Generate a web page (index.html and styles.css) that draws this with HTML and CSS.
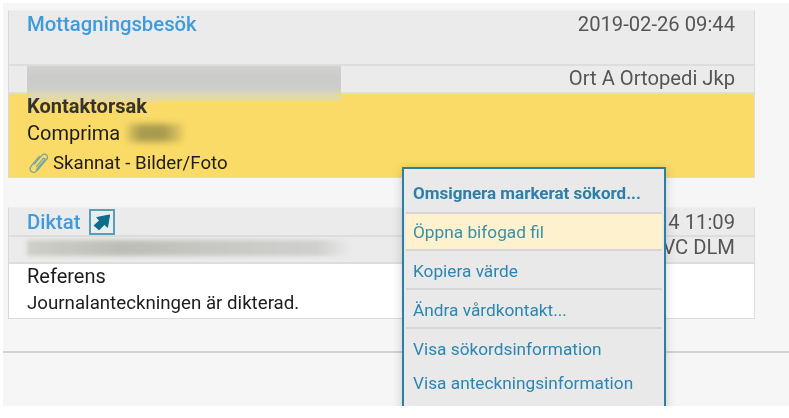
FILE: index.html
```html
<!DOCTYPE html>
<html lang="sv">
<head>
<meta charset="utf-8">
<title>Journal</title>
<link rel="stylesheet" href="styles.css">
</head>
<body>
<div class="app">
  <section class="card card-first">
    <header class="head head-tall">
      <a class="title">Mottagningsbesök</a>
      <span class="meta">2019-02-26 09:44</span>
    </header>
    <div class="sub sub-first">
      <span class="meta">Ort A Ortopedi Jkp</span>
      <div class="redact redact-a"></div>
    </div>
    <div class="body yellow">
      <div class="strong">Kontaktorsak</div>
      <div class="line-big">Comprima<span class="redact-b"></span></div>
      <div class="line-small">
        <svg class="clip" viewBox="2 1 16 17" width="19" height="20" aria-hidden="true">
          <path d="M6.500 10.500 12.600 3.200c1.200-1.400 3-1.500 4.100-.5 1.100 1 1.100 2.700 0 4L9.200 15.600c-1.700 2-3.900 2.400-5.300 1.200-1.400-1.200-1.300-3.300.3-5.200L10.600 4M8.400 12.400 13.600 6.200c.6-.7 1.200-.9 1.600-.5.4.4.3 1-.3 1.700L8.300 15" fill="none" stroke="#7ba79a" stroke-width="1.100" stroke-linecap="round"/>
        </svg>
        <span>Skannat - Bilder/Foto</span>
      </div>
    </div>
  </section>

  <section class="card card-second">
    <header class="head head-short">
      <div class="title-wrap">
        <a class="title">Diktat</a>
        <span class="jump">
          <svg viewBox="0 0 20 20" width="20" height="20" aria-hidden="true">
            <path d="M2.500 13.500 8 8.500 5 5.500 17.500 3 15.500 15 12.500 12 7 17.500Z" fill="#0f6d8c" stroke="#0f6d8c" stroke-width="1.200" stroke-linejoin="round"/>
          </svg>
        </span>
      </div>
      <span class="meta">2019-02-14 11:09</span>
    </header>
    <div class="sub sub-second">
      <span class="meta">VC DLM</span>
      <div class="redact redact-c"></div>
    </div>
    <div class="body white">
      <div class="line-big">Referens</div>
      <div class="line-small line-plain">Journalanteckningen är dikterad.</div>
    </div>
  </section>

  <div class="rule"></div>

  <nav class="menu">
    <div class="item item-bold">Omsignera markerat sökord...</div>
    <div class="item item-active">Öppna bifogad fil</div>
    <div class="item item-sep">Kopiera värde</div>
    <div class="item item-sep">Ändra vårdkontakt...</div>
    <div class="item item-plain">Visa sökordsinformation</div>
    <div class="item item-plain2">Visa anteckningsinformation</div>
  </nav>
</div>
</body>
</html>
```
FILE: styles.css
```css
* { box-sizing: border-box; }
html, body { margin: 0; height: 100%; background: #fff; overflow: hidden; }
body { font-family: Roboto, "Liberation Sans", sans-serif; color: #222; }
.app {
  position: relative;
  margin: 3px 0 0 3px;
  height: 403px;
  padding: 7px 34px 0 5px;
  background: #f6f6f6;
  overflow: hidden;
  filter: blur(0.35px);
}
.card {
  border: 1px solid #dcdcdc;
  border-top-color: #f0f0f0;
  border-left-color: #d8d8d8;
  background: #ebebeb;
  display: flex;
  flex-direction: column;
}
.card-first { height: 168px; }
.card-second { height: 112px; margin-top: 29px; }
.head { display: flex; justify-content: space-between; padding: 0 19px 0 18px; border-bottom: 2px solid #dddddd; }
.head-tall { height: 55px; padding-top: 1px; }
.head-short { height: 29px; padding-top: 2px; align-items: flex-start; }
.title { color: #3f9bdc; font-size: 20.300px; line-height: 24px; font-weight: 500; }
.title-wrap { display: flex; gap: 9px; }
.jump {
  width: 26px; height: 26px; margin-top: -1px;
  border: 2px solid #5a9fb8;
  background: #e6eef0;
  display: flex; align-items: center; justify-content: center;
}
.meta { color: #555; font-size: 20.200px; line-height: 24px; }
.sub { position: relative; display: flex; justify-content: flex-end; padding: 0 19px 0 18px; border-bottom: 2px solid #dddddd; }
.sub-first { height: 28px; }
.sub-second { height: 27px; align-items: flex-start; }
.sub-second .meta { margin-top: -2px; }
.redact { position: absolute; }
.redact-a {
  left: 18px; top: 0; width: 314px; height: 35px; z-index: 2;
  background: linear-gradient(#d2d2d0 0, #cbcbc9 30%, #cdcdcb 65%, #ddd8b0 82%, #e6dc9c 100%);
}
.redact-c {
  left: 18px; top: 3px; width: 322px; height: 16px;
  background: linear-gradient(90deg, #cfcfc8, #bdbdb8 30%, #c8c8c4 60%, #d0d0cf 90%, #e8e8e8);
  filter: blur(2px);
}
.body { flex: 1; padding: 0 18px; color: #1d1d1d; }
.yellow { background: #fadb67; }
.white { background: #fff; }
.strong { font-size: 20px; font-weight: 700; line-height: 24px; color: #333; position: relative; z-index: 3; }
.line-big { font-size: 20px; height: 30px; line-height: 30px; display: flex; align-items: center; }
.white .line-big { height: 24px; line-height: 24px; }
.redact-b {
  display: inline-block; width: 56px; height: 18px; margin-left: 7px;
  background: linear-gradient(90deg, #e0c660, #a89a4e 25%, #a89a4e 65%, #e8cc62);
  filter: blur(3px);
}
.line-small { font-size: 18.700px; line-height: 24px; display: flex; align-items: center; gap: 5px; margin-top: 3px; }
.white .line-small { margin-top: 3px; }
.clip { margin-left: 2px; flex: none; }
.rule { height: 2px; background: #d2d2d2; margin: 32px -34px 0 -5px; }
.menu {
  position: absolute;
  left: 399px; top: 164px;
  width: 264px; height: 260px;
  border: 2px solid #2a7fa5;
  padding: 0 2px;
  background: #e9e9e9;
  box-shadow: 0 2px 10px rgba(0,0,0,.18);
  color: #2b86b0;
  font-size: 17.250px;
}
.item { display: flex; align-items: center; padding: 0 7px; height: 39px; line-height: 20px; }
.item-bold { height: 43px; padding-top: 5px; font-weight: 700; color: #2b7fa8; font-size: 17px; }
.item-active { height: 39px; background: #fdf2cd; border-top: 2px solid #d6d6d6; border-bottom: 2px solid #d6d6d6; color: #3a8fa8; }
.item-sep { border-bottom: 2px solid #d6d6d6; padding-top: 3px; }
.item-plain { height: 38px; padding-top: 2px; }
.item-plain2 { height: 32px; }
```
